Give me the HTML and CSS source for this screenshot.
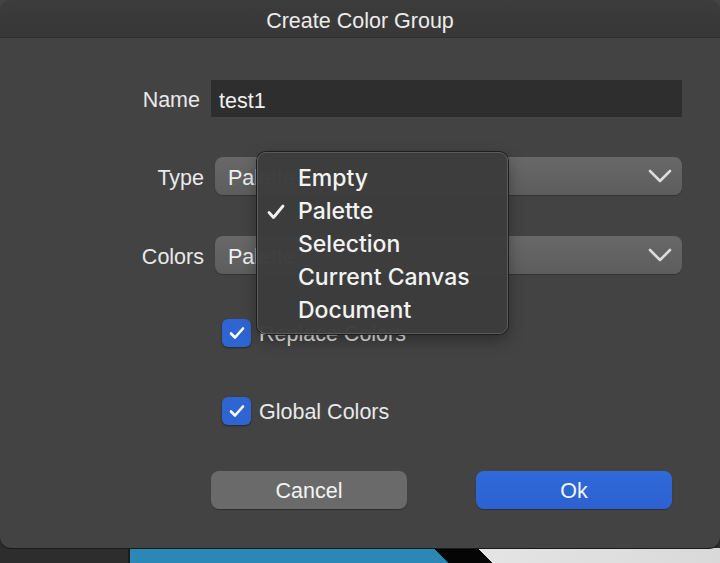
FILE: index.html
```html
<!DOCTYPE html>
<html>
<head>
<meta charset="utf-8">
<link rel="stylesheet" href="styles.css">
</head>
<body>
<div class="window">
  <div class="titlebar">Create Color Group</div>
  <div class="content">
    <div class="form">
      <div class="row row-name">
        <span class="lbl">Name</span>
        <div class="input">test1</div>
      </div>
      <div class="row row-type">
        <span class="lbl">Type</span>
        <div class="select"><span class="val">Palette</span>
          <svg class="chev" width="24" height="14" viewBox="0 0 24 14"><polyline points="2,2 12,12 22,2" fill="none" stroke="#dcdcdc" stroke-width="2.6" stroke-linecap="round" stroke-linejoin="round"/></svg>
        </div>
      </div>
      <div class="row row-colors">
        <span class="lbl">Colors</span>
        <div class="select"><span class="val">Palette</span>
          <svg class="chev" width="24" height="14" viewBox="0 0 24 14"><polyline points="2,2 12,12 22,2" fill="none" stroke="#dcdcdc" stroke-width="2.6" stroke-linecap="round" stroke-linejoin="round"/></svg>
        </div>
      </div>
      <div class="check-row row-replace">
        <span class="box"><svg width="18" height="16" viewBox="0 0 18 16"><polyline points="3,8.5 7,12.5 15,3.5" fill="none" stroke="#fff" stroke-width="2.6" stroke-linecap="round" stroke-linejoin="round"/></svg></span>
        <span class="clabel">Replace Colors</span>
      </div>
      <div class="check-row row-global">
        <span class="box"><svg width="18" height="16" viewBox="0 0 18 16"><polyline points="3,8.5 7,12.5 15,3.5" fill="none" stroke="#fff" stroke-width="2.6" stroke-linecap="round" stroke-linejoin="round"/></svg></span>
        <span class="clabel">Global Colors</span>
      </div>
    </div>
    <div class="buttons">
      <div class="btn btn-cancel">Cancel</div>
      <div class="btn btn-ok">Ok</div>
    </div>
  </div>
  <div class="menu">
    <div class="item">Empty</div>
    <div class="item checked"><svg class="tick" width="18" height="16" viewBox="0 0 18 16"><polyline points="2,8.5 6.5,13.5 16,2" fill="none" stroke="#f2f2f2" stroke-width="2.8" stroke-linecap="round" stroke-linejoin="round"/></svg>Palette</div>
    <div class="item">Selection</div>
    <div class="item">Current Canvas</div>
    <div class="item">Document</div>
  </div>
</div>
<div class="desktop">
  <div class="desk-left"></div>
  <div class="desk-art"></div>
</div>
</body>
</html>
```

FILE: styles.css
```css
html, body {
  margin: 0;
  padding: 0;
}
body {
  width: 720px;
  height: 563px;
  overflow: hidden;
  background: #2c2c2c;
  font-family: "Liberation Sans", Arial, sans-serif;
  color: #e9e9e9;
}
.window {
  position: relative;
  height: 548px;
  background: #434343;
  border-radius: 0 0 11px 11px;
  box-shadow: 0 1px 0 #1a1a1a;
  display: flex;
  flex-direction: column;
}
.titlebar {
  height: 37px;
  overflow: hidden;
  border-bottom: 1px solid #2f2f2f;
  background: linear-gradient(#3c3c3c, #373737);
  text-align: center;
  font-size: 21.5px;
  line-height: 42px;
  color: #ececec;
  border-radius: 10px 10px 0 0;
}
.content {
  display: flex;
  flex-direction: column;
  padding-top: 42px;
}
.form {
  display: flex;
  flex-direction: column;
}
.row {
  display: grid;
  grid-template-columns: 204px 1fr;
  column-gap: 7px;
  align-items: center;
  padding-right: 38px;
  font-size: 21.5px;
}
.lbl {
  text-align: right;
  padding-top: 4px;
}
.row-name .lbl {
  padding-right: 4px;
}
.input {
  height: 37px;
  box-sizing: border-box;
  background: #2e2e2e;
  line-height: 37px;
  padding: 3px 0 0 8px;
  color: #f0f0f0;
}
.row-type {
  margin-top: 40px;
}
.row-colors {
  margin-top: 41px;
}
.select {
  margin-left: 4px;
  height: 38px;
  border-radius: 8px;
  background: linear-gradient(#686868, #5d5d5d);
  box-shadow: 0 1px 1px rgba(0,0,0,0.25);
  display: flex;
  align-items: center;
  justify-content: space-between;
  padding: 0 10px 0 13px;
  color: #f0f0f0;
}
.val {
  padding-top: 4px;
}
.chev {
  display: block;
}
.check-row {
  display: flex;
  align-items: center;
  height: 28px;
  padding-left: 222px;
  font-size: 21.5px;
  gap: 8px;
}
.clabel {
  padding-top: 3px;
}
.row-replace {
  margin-top: 45px;
}
.row-global {
  margin-top: 50px;
}
.box {
  width: 29px;
  height: 28px;
  border-radius: 6px;
  background: #2f65d3;
  box-shadow: 0 1px 2px rgba(0,0,0,0.45);
  display: flex;
  align-items: center;
  justify-content: center;
}
.box svg {
  display: block;
}
.buttons {
  display: flex;
  gap: 69px;
  padding-left: 211px;
  margin-top: 46px;
}
.btn {
  width: 196px;
  height: 38px;
  overflow: hidden;
  border-radius: 8px;
  text-align: center;
  line-height: 41px;
  font-size: 21.5px;
  color: #f4f4f4;
  box-shadow: 0 1px 1px rgba(0,0,0,0.3);
}
.btn-cancel {
  background: #6a6a6a;
}
.btn-ok {
  background: linear-gradient(#3069d9, #2c62d0);
}
.menu {
  position: absolute;
  left: 257px;
  top: 152px;
  width: 251px;
  height: 182px;
  padding: 9px 0 7px;
  box-sizing: border-box;
  background: rgba(60, 60, 60, 0.98);
  border: 1px solid #5b5b5b;
  border-radius: 9px;
  box-shadow: 0 0 0 1px #1e1e1e, 0 6px 16px rgba(0,0,0,0.35);
  font-family: Inter, "Noto Sans", sans-serif;
  font-size: 23px;
  font-weight: 500;
  color: #f3f3f3;
}
.item {
  position: relative;
  height: 33px;
  line-height: 33px;
  padding-left: 40px;
}
.tick {
  position: absolute;
  left: 9px;
  top: 9px;
}
.desktop {
  display: flex;
  height: 15px;
}
.desk-left {
  width: 128px;
  background: #2d2d2d;
  border-right: 2px solid #1c1c1c;
}
.desk-art {
  flex: 1;
  background: linear-gradient(45deg, #2b87b6 0, #2b87b6 225px, #050505 225px, #050505 256px, #e4e4e4 256px, #d9d9d9 100%);
}
```
